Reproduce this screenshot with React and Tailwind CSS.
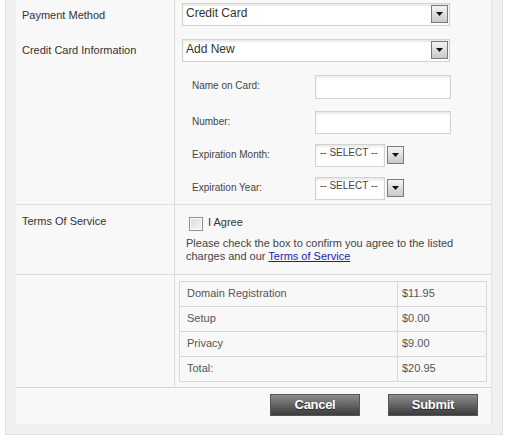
import React from 'react';

const font = { fontFamily: '"Liberation Sans", Arial, sans-serif' };

function Arrow({ className = '' }) {
  return (
    <div className={`flex items-center justify-center w-[17px] h-[18px] border border-[#7a7a7a] bg-gradient-to-b from-[#f4f4f4] to-[#c9c9c9] ${className}`}>
      <svg width="7" height="4" viewBox="0 0 7 4"><path d="M0 0h7L3.5 4z" fill="#111" /></svg>
    </div>
  );
}

function BigSelect({ value }) {
  return (
    <div className="relative w-[268px] h-[23px] border border-[#d2d2d2] bg-white shadow-[inset_0_2px_2px_rgba(0,0,0,0.09)]">
      <span className="absolute left-[3px] top-[2px] text-[12px] leading-[14px] text-[#333]">{value}</span>
      <Arrow className="absolute right-[1px] top-[1px]" />
    </div>
  );
}

function SmallSelect() {
  return (
    <div className="flex items-start">
      <div className="relative w-[70px] h-[23px] border border-[#d2d2d2] bg-white shadow-[inset_0_2px_2px_rgba(0,0,0,0.09)]">
        <span className="absolute left-[4px] top-[2px] text-[10px] leading-[12px] text-[#444]">-- SELECT --</span>
      </div>
      <Arrow className="ml-[2px] mt-[2px]" />
    </div>
  );
}

function Input({ h = 'h-[24px]' }) {
  return <div className={`w-[136px] ${h} border border-[#d2d2d2] bg-white shadow-[inset_0_2px_2px_rgba(0,0,0,0.08)]`} />;
}

function SubRow({ label, children, className = '' }) {
  return (
    <div className={`flex items-center ${className}`}>
      <span className="w-[133px] pl-[10px] pb-[3px] text-[10px] text-[#444]">{label}</span>
      {children}
    </div>
  );
}

const charges = [
  ['Domain Registration', '$11.95'],
  ['Setup', '$0.00'],
  ['Privacy', '$9.00'],
  ['Total:', '$20.95'],
];

export default function App() {
  return (
    <div className="bg-white w-[531px] h-[446px]" style={font}>
      <div className="ml-[5px] w-[498px] border-x border-b border-[#e0e0e0] bg-[#f0f0f0] pl-[10px] pr-[10px] pb-[10px]">
        <div className="bg-[#f8f8f8] border-r border-[#e2e2e2]">
          {/* payment */}
          <div className="flex border-b border-[#dcdcdc]">
            <div className="w-[159px] border-r border-[#dcdcdc] pl-[6px] text-[11px] leading-[13px] text-[#333]">
              <div className="mt-[9px]">Payment Method</div>
              <div className="mt-[22px]">Credit Card Information</div>
            </div>
            <div className="flex-1 pl-[7px] pt-[3px] pb-[4px]">
              <BigSelect value="Credit Card" />
              <div className="mt-[13px]"><BigSelect value="Add New" /></div>
              <SubRow label="Name on Card:" className="mt-[13px]"><Input /></SubRow>
              <SubRow label="Number:" className="mt-[12px]"><Input h="h-[23px]" /></SubRow>
              <SubRow label="Expiration Month:" className="mt-[10px]"><SmallSelect /></SubRow>
              <SubRow label="Expiration Year:" className="mt-[10px]"><SmallSelect /></SubRow>
            </div>
          </div>

          {/* terms */}
          <div className="flex border-b border-[#dcdcdc] h-[70px]">
            <div className="w-[159px] border-r border-[#dcdcdc] pl-[6px] pt-[10px] text-[11px] leading-[13px] text-[#333]">Terms Of Service</div>
            <div className="flex-1 pl-[11px] pt-[11px]">
              <div className="flex items-center ml-[3px]">
                <div className="w-[14px] h-[14px] border border-[#8f8f8f] bg-gradient-to-br from-[#dedede] to-[#f4f4f4] shadow-[inset_0_0_0_1px_#fff]" />
                <span className="ml-[5px] pb-[2px] text-[11px] leading-[13px] text-[#333]">I Agree</span>
              </div>
              <p className="mt-[6px] text-[11px] leading-[13px] text-[#444]">
                Please check the box to confirm you agree to the listed<br />
                charges and our <a href="#" className="text-[#1a1ab0] underline">Terms of Service</a>
              </p>
            </div>
          </div>

          {/* charges */}
          <div className="flex border-b border-[#d6d6d6] h-[113px]">
            <div className="w-[159px] border-r border-[#dcdcdc]" />
            <div className="flex-1 pl-[4px] pt-[6px]">
              <table className="w-[308px] border-collapse text-[11px] text-[#555]">
                <tbody>
                  {charges.map(([name, price]) => (
                    <tr key={name} className="h-[25px]">
                      <td className="border border-[#d8d8d8] pl-[7px] pb-[2px] w-[218px]">{name}</td>
                      <td className="border border-[#d8d8d8] pl-[4px] pb-[2px]">{price}</td>
                    </tr>
                  ))}
                </tbody>
              </table>
            </div>
          </div>

          {/* buttons */}
          <div className="flex justify-end gap-[28px] pr-[13px] pt-[6px] h-[36px]">
            {['Cancel', 'Submit'].map((b) => (
              <button key={b} className="w-[90px] h-[22px] border border-[#555] bg-gradient-to-b from-[#8e8e8e] to-[#3c3c3c] text-white text-[13px] font-bold leading-[18px] tracking-[-0.3px] [text-shadow:0_1px_1px_#222]">
                {b}
              </button>
            ))}
          </div>
        </div>
      </div>
    </div>
  );
}
